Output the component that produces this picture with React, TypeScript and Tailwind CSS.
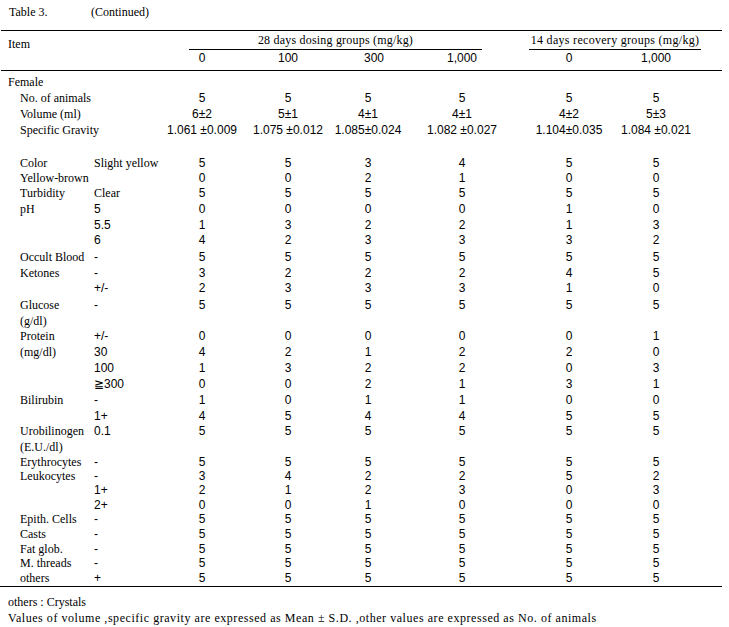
import React from 'react';

type Row = {
  a: string;
  b: string;
  v: string[];
  h: number;
};

const SERIF = "font-['Liberation_Serif',serif]";
const SANS = "font-['Liberation_Sans',Arial,sans-serif]";
const COLS = 'grid grid-cols-[160px_84px_88px_72px_116px_98px_76px]';

const HEIGHTS: Record<number, string> = {
  14: 'h-[14px]',
  15: 'h-[15px]',
  16: 'h-[16px]',
  17: 'h-[17px]',
};

const five = ['5', '5', '5', '5', '5', '5'];

const TOP_ROWS: Row[] = [
  { a: 'No. of animals', b: '', v: five, h: 16 },
  { a: 'Volume (ml)', b: '', v: ['6±2', '5±1', '4±1', '4±1', '4±2', '5±3'], h: 16 },
  {
    a: 'Specific Gravity',
    b: '',
    v: ['1.061 ±0.009', '1.075 ±0.012', '1.085±0.024', '1.082 ±0.027', '1.104±0.035', '1.084 ±0.021'],
    h: 16,
  },
];

const ROWS: Row[] = [
  { a: 'Color', b: 'Slight yellow', v: ['5', '5', '3', '4', '5', '5'], h: 15 },
  { a: 'Yellow-brown', b: '', v: ['0', '0', '2', '1', '0', '0'], h: 15 },
  { a: 'Turbidity', b: 'Clear', v: five, h: 16 },
  { a: 'pH', b: '5', v: ['0', '0', '0', '0', '1', '0'], h: 16 },
  { a: '', b: '5.5', v: ['1', '3', '2', '2', '1', '3'], h: 15 },
  { a: '', b: '6', v: ['4', '2', '3', '3', '3', '2'], h: 16 },
  { a: 'Occult Blood', b: '-', v: five, h: 17 },
  { a: 'Ketones', b: '-', v: ['3', '2', '2', '2', '4', '5'], h: 15 },
  { a: '', b: '+/-', v: ['2', '3', '3', '3', '1', '0'], h: 16 },
  { a: 'Glucose', b: '-', v: five, h: 17 },
  { a: '(g/dl)', b: '', v: [], h: 15 },
  { a: 'Protein', b: '+/-', v: ['0', '0', '0', '0', '0', '1'], h: 16 },
  { a: '(mg/dl)', b: '30', v: ['4', '2', '1', '2', '2', '0'], h: 16 },
  { a: '', b: '100', v: ['1', '3', '2', '2', '0', '3'], h: 16 },
  { a: '', b: '≧300', v: ['0', '0', '2', '1', '3', '1'], h: 16 },
  { a: 'Bilirubin', b: '-', v: ['1', '0', '1', '1', '0', '0'], h: 16 },
  { a: '', b: '1+', v: ['4', '5', '4', '4', '5', '5'], h: 15 },
  { a: 'Urobilinogen', b: '0.1', v: five, h: 16 },
  { a: '(E.U./dl)', b: '', v: [], h: 15 },
  { a: 'Erythrocytes', b: '-', v: five, h: 14 },
  { a: 'Leukocytes', b: '-', v: ['3', '4', '2', '2', '5', '2'], h: 14 },
  { a: '', b: '1+', v: ['2', '1', '2', '3', '0', '3'], h: 15 },
  { a: '', b: '2+', v: ['0', '0', '1', '0', '0', '0'], h: 14 },
  { a: 'Epith. Cells', b: '-', v: five, h: 15 },
  { a: 'Casts', b: '-', v: five, h: 15 },
  { a: 'Fat glob.', b: '-', v: five, h: 14 },
  { a: 'M. threads', b: '-', v: five, h: 15 },
  { a: 'others', b: '+', v: five, h: 16 },
];

function DataRow({ row }: { row: Row }) {
  const bSerif = /[a-z]/i.test(row.b);
  return (
    <div className={`${COLS} ${HEIGHTS[row.h]} items-center leading-[16px]`}>
      <div className="flex pl-[20px] whitespace-nowrap">
        <span className={`w-[74px] shrink-0 ${SERIF} text-[12px]`}>{row.a}</span>
        <span className={`${bSerif ? SERIF : SANS} text-[12px]`}>{row.b}</span>
      </div>
      {row.v.map((val, i) => (
        <div key={i} className={`text-center whitespace-nowrap ${SANS} text-[12px]`}>
          {val}
        </div>
      ))}
    </div>
  );
}

export default function App() {
  return (
    <div className={`w-[729px] h-[627px] bg-white text-black overflow-hidden ${SERIF} text-[12px]`}>
      {/* title */}
      <div className="h-[30px] pl-[9px] pt-[4px] flex leading-[16px]">
        <span className="w-[82px]">Table 3.</span>
        <span>(Continued)</span>
      </div>

      {/* header */}
      <div className="ml-[1px] w-[721px] border-t border-b border-black">
        <div className="flex h-[19px]">
          <div className="w-[188px] pl-[7px] pt-[5px] leading-[16px]">Item</div>
          <div className="w-[293px] border-b border-black text-center leading-[18px] whitespace-nowrap tracking-[0.2px]">
            28 days dosing groups (mg/kg)
          </div>
          <div className="w-[47px]" />
          <div className="w-[172px] border-b border-black text-center leading-[18px] whitespace-nowrap tracking-[0.3px]">
            14 days recovery groups (mg/kg)
          </div>
        </div>
        <div className={`${COLS} h-[20px] -ml-[1px] leading-[16px] ${SANS} text-[12px]`}>
          <div />
          <div className="text-center">0</div>
          <div className="text-center">100</div>
          <div className="text-center pl-[12px]">300</div>
          <div className="text-center">1,000</div>
          <div className="text-center">0</div>
          <div className="text-center">1,000</div>
        </div>
      </div>

      {/* body */}
      <div className="w-[722px] pt-[3px] border-b border-black">
        <div className="h-[16px] pl-[8px] leading-[16px]">Female</div>
        {TOP_ROWS.map((r, i) => (
          <DataRow key={i} row={r} />
        ))}
        <div className="h-[17px]" />
        {ROWS.map((r, i) => (
          <DataRow key={i} row={r} />
        ))}
      </div>

      {/* notes */}
      <div className="pt-[7px] pl-[8px] leading-[16px] whitespace-nowrap">
        <div>others : Crystals</div>
        <div className="tracking-[0.55px]">
          Values of volume ,specific gravity are expressed as Mean ± S.D. ,other values are expressed as No. of animals
        </div>
      </div>
    </div>
  );
}
